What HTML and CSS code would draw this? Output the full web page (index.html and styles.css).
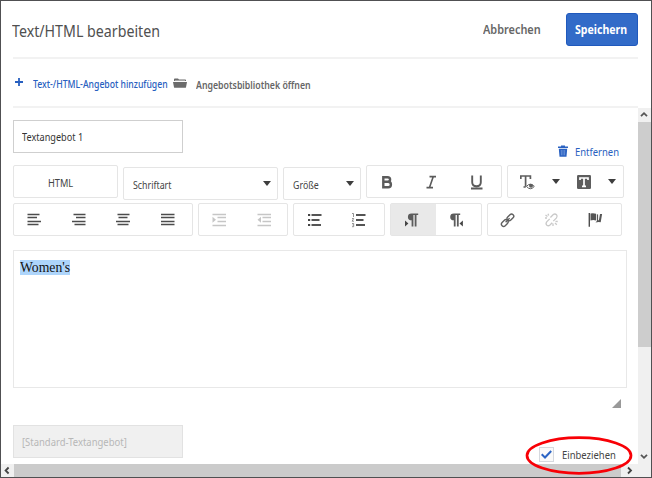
FILE: index.html
```html
<!DOCTYPE html>
<html lang="de">
<head>
<meta charset="utf-8">
<title>Text/HTML bearbeiten</title>
<link rel="stylesheet" href="styles.css">
</head>
<body>
<div class="dialog">
  <header class="header">
    <h1 class="title">Text/HTML bearbeiten</h1>
    <button class="cancel"><span class="t-cancel">Abbrechen</span></button>
    <button class="save"><span class="t-save">Speichern</span></button>
  </header>
  <nav class="actions">
    <svg class="plus" width="8" height="8" viewBox="0 0 8 8"><path d="M4 0v8M0 4h8" stroke="#2860c0" stroke-width="1.8"/></svg>
    <a class="add">Text-/HTML-Angebot hinzufügen</a>
    <svg class="folder" width="14" height="10" viewBox="0 0 14 10"><path d="M1 3V1.2Q1 .4 1.8.4H5l1 1.1h6.3q.7 0 .7.8V3z" fill="#6b6b6b"/><path d="M0 4h14l-1 5.2q-.1.6-.8.6H1.8q-.7 0-.8-.6z" fill="#6b6b6b"/><path d="M2 2.6h10" stroke="#ccc" stroke-width=".7"/></svg>
    <a class="library">Angebotsbibliothek öffnen</a>
  </nav>
  <div class="workspace">
    <main class="content">
      <div class="offer-row">
        <div class="field"><span class="t-name">Textangebot 1</span></div>
        <a class="remove"><svg width="10" height="12" viewBox="0 0 10 12"><path d="M0 1.5h3V.4h4v1.1h3V3H0z" fill="#2a62c2"/><path d="M.8 3.7h8.4l-.7 8H1.5z" fill="#2a62c2"/><path d="M3.3 5l.2 5.3M5 5v5.3M6.7 5l-.2 5.3" stroke="#b8cdf0" stroke-width=".4"/></svg><span class="t-remove">Entfernen</span></a>
      </div>
      <div class="toolbar first">
        <div class="group html"><span class="t-html">HTML</span></div>
        <div class="group select font"><span class="t-font">Schriftart</span><i class="caret"></i></div>
        <div class="group select size"><span class="t-size">Größe</span><i class="caret"></i></div>
        <div class="group style">
          <svg width="45" height="32" viewBox="0 0 45 32"><path d="M16.300 11.200h4.200q2.600 0 2.600 2.300t-2.600 2.300H16.300zm0 4.600h4.800q2.800 0 2.800 2.700t-2.800 2.700H16.300z" fill="none" stroke="#5b5b5b" stroke-width="2.400"/></svg>
          <svg width="45" height="32" viewBox="0 0 45 32"><path d="M17.500 10.600h6.500M14.500 21.600H21M21.300 10.600l-3.800 11" fill="none" stroke="#5b5b5b" stroke-width="1.600"/></svg>
          <svg width="45" height="32" viewBox="0 0 45 32"><path d="M15.200 9.500v6.700q0 4 4.300 4t4.300-4V9.500M14 22.500h11.500" fill="none" stroke="#5b5b5b" stroke-width="1.900"/></svg>
        </div>
        <div class="group color">
          <svg class="textcolor" width="15" height="15" viewBox="0 0 15 15"><path d="M.8 4V1h9.600v3M5.600 1v10.500M3.500 12h2.200" fill="none" stroke="#5d5d5d" stroke-width="1.700"/><path d="M6.500 11.400q3.600-4.400 7.800 0-4 4.700-7.800 0z" fill="#fff" stroke="#5d5d5d" stroke-width="1"/><circle cx="11" cy="10.800" r="2" fill="#5d5d5d"/></svg>
          <i class="caret"></i>
          <svg class="backcolor" width="14" height="14" viewBox="0 0 14 14"><rect width="14" height="14" rx="1.200" fill="#5d5d5d"/><path d="M3 5V3h8v2M7 3v8.200M5 11.300h4" fill="none" stroke="#fff" stroke-width="1.700"/></svg>
          <i class="caret"></i>
        </div>
      </div>
      <div class="toolbar second">
        <div class="group align">
          <svg viewBox="0 0 45 31"><path d="M13.500 10.500h12M13.500 13.500h9.500M13.500 17.500h13.500M13.500 20.500h11" stroke="#4c4c4c" stroke-width="1.300"/></svg>
          <svg viewBox="0 0 45 31"><path d="M14.500 10.500h12M17 13.500h9.500M13 17.500h13.500M15.500 20.500h11" stroke="#4c4c4c" stroke-width="1.300"/></svg>
          <svg viewBox="0 0 45 31"><path d="M14.500 10.500h12M15.500 13.500h9M13 17.500h14M14.500 20.500h11" stroke="#4c4c4c" stroke-width="1.300"/></svg>
          <svg viewBox="0 0 45 31"><path d="M13 10.500h13.500M13 13.500h13.500M13 17.500h13.500M13 20.500h13.500" stroke="#4c4c4c" stroke-width="1.300"/></svg>
        </div>
        <div class="group indent">
          <svg viewBox="0 0 45 31"><path d="M13.500 10.500H27M18.500 13.500H27M18.500 17.500H27M13.500 21.500H27" stroke="#c6c6c6" stroke-width="1.300"/><path d="M13.500 12.700l3.500 3-3.500 3z" fill="#c6c6c6"/></svg>
          <svg viewBox="0 0 45 31"><path d="M13.500 10.500H27M18.500 13.500H27M18.500 17.500H27M13.500 21.500H27" stroke="#c6c6c6" stroke-width="1.300"/><path d="M17 12.700l-3.500 3 3.500 3z" fill="#c6c6c6"/></svg>
        </div>
        <div class="group lists">
          <svg viewBox="0 0 45 31"><path d="M17.500 11H27.500M17.500 16H25.500M17.500 21H27" stroke="#555" stroke-width="2.100"/><path d="M14 11h2.200M14 16h2.200M14 21h2.200" stroke="#444" stroke-width="2.100"/></svg>
          <svg viewBox="0 0 45 31"><path d="M17 11H26.500M17 16H24.500M17 21H26" stroke="#555" stroke-width="2.100"/><path d="M13 9.500h1.500V13M13 14.500h1.700l-1.600 2.700H15M13 19.500h1.700v3.200H13M13.500 21h1" fill="none" stroke="#777" stroke-width=".8"/></svg>
        </div>
        <div class="group direction">
          <svg class="active" viewBox="0 0 45 31"><path d="M27.200 9.500H20.500q-3.600 0-3.600 3.400t3.700 3.400v6.200h1.800V11h1.300v11.500H25.500V11h1.700z" fill="#5c5c5c"/><path d="M14 16.500l3.400 3-3.400 3z" fill="#444"/></svg>
          <svg viewBox="0 0 45 31"><path d="M24.200 9.500h-6.400q-3.600 0-3.600 3.400t3.600 3.400v6.200h1.800V11h1.300v11.500h1.800V11h1.500z" fill="#5c5c5c"/><path d="M26.900 16.500l-3.400 3 3.400 3z" fill="#444"/></svg>
        </div>
        <div class="group links">
          <svg viewBox="0 0 45 31"><g fill="none" stroke="#606060" stroke-width="1.400"><rect x="-3.800" y="-2.200" width="7.600" height="4.400" rx="2.200" transform="translate(16.800 19) rotate(-45)"/><rect x="-3.800" y="-2.200" width="7.600" height="4.400" rx="2.200" transform="translate(22.400 13.400) rotate(-45)"/><path d="M17.600 18.200l4-4"/></g></svg>
          <svg viewBox="0 0 45 31"><g fill="none" stroke="#c9c9c9" stroke-width="1.300"><path d="M16.700 14.900l-3 3q-1.400 1.900.2 3.300 1.500 1.200 3.100-.2l2.200-2.200M17.400 13.500l2.900-2.900q1.700-1.300 3.200.1 1.300 1.600 0 3.200l-3.200 3.200M12.500 11l2 1.500M15 9.800l.7 1.700M12 14h2M20 19.500V22M22 19l1.800 1.800M22.500 17.300l2.200.2"/></g></svg>
          <svg viewBox="0 0 45 31"><path d="M12.300 9v13.800" stroke="#4e4e4e" stroke-width="1.400"/><path d="M13.500 9.500q3-.6 5.600.3v6.600q-2.800-.8-5.600 0z" fill="#555"/><path d="M19.900 10.300l1.200.1v5.900h.8l1.100-6.200 2.100-.2-1.400 8.300q-2.600-.4-5.200.2l1.400-1.300z" fill="#555"/></svg>
        </div>
      </div>
      <section class="editor"><span class="selection">Women's</span></section>
      <div class="grip-row"><i class="grip"></i></div>
      <div class="default-row">
        <div class="field disabled"><span class="t-default">[Standard-Textangebot]</span></div>
        <label class="include"><span class="box"><svg width="11" height="9" viewBox="0 0 11 9"><path d="M.7 4.300L4 7.500 10.200 1" fill="none" stroke="#2b64c4" stroke-width="2"/></svg></span><span class="t-include">Einbeziehen</span></label>
      </div>
    </main>
    <aside class="vbar">
      <svg width="12" height="14" viewBox="0 0 12 14"><path d="M3 8.200l3-3 3 3" fill="none" stroke="#555" stroke-width="1.800"/></svg>
      <i class="vthumb"></i>
      <svg class="down" width="12" height="14" viewBox="0 0 12 14"><path d="M3 4.800l3 3 3-3" fill="none" stroke="#555" stroke-width="1.800"/></svg>
    </aside>
  </div>
  <footer class="hbar">
    <svg width="13" height="13" viewBox="0 0 13 13"><path d="M7.600 3.500l-3 3 3 3" fill="none" stroke="#444" stroke-width="1.800"/></svg>
    <i class="hthumb"></i>
    <svg width="17" height="13" viewBox="0 0 17 13"><path d="M7 3.500l3 3-3 3" fill="none" stroke="#444" stroke-width="1.800"/></svg>
  </footer>
  <svg class="highlight" width="108" height="40" viewBox="0 0 108 40"><ellipse cx="54" cy="19.500" rx="52" ry="17.800" fill="none" stroke="#f80006" stroke-width="2.700"/></svg>
</div>
</body>
</html>
```
FILE: styles.css
```css
* { box-sizing: border-box; }
body { margin: 0; font-family: "Noto Sans", "Open Sans", sans-serif; color: #444; overflow: hidden; }
svg { display: block; flex: none; }
span, a, h1 { white-space: nowrap; }
.title, .add, .library, [class^="t-"] { display: block; flex: none; transform-origin: 0 50%; }
.dialog { position: relative; width: 652px; height: 478px; border: 1px solid #505052; background: #fff; display: flex; flex-direction: column; }
.header { height: 58px; flex: none; margin: 0 13px 0 12px; border-bottom: 2px solid #f2f2f2; display: flex; align-items: center; padding-top: 1px; }
.title { margin: 0 auto 0 -1px; font-size: 17px; font-weight: 400; color: #505050; transform: scaleX(.836); padding-top: 2px; }
button { font-family: inherit; border: 0; background: none; padding: 0; }
.cancel { width: 59px; margin-right: 24px; font-size: 12px; font-weight: 600; color: #666; }
.t-cancel { width: 58px; text-align: left; transform: scaleX(.91); }
.save { width: 72px; height: 33px; background: #326bc8; border: 1px solid #2059bd; border-radius: 3px; color: #fff; font-size: 12px; font-weight: 700; padding-left: 8px; }
.t-save { width: 54px; text-align: left; transform: scaleX(.88); }
.actions { height: 49px; flex: none; margin: 0 0 0 12px; border-bottom: 2px solid #f2f2f2; display: flex; align-items: center; width: 625px; padding-top: 3px; }
.plus { margin: 0 10px 4px 2px; }
.add { width: 139.5px; font-size: 10.5px; font-weight: 500; color: #2860c0; transform: scaleX(.825); }
.folder { margin-right: 9px; margin-bottom: 2px; }
.library { font-size: 10.5px; font-weight: 600; color: #666; padding-top: 1px; transform: scaleX(.835); }
.workspace { height: 356px; flex: none; display: flex; }
.content { width: 637px; padding: 12px 0 0 12px; }
.offer-row { display: flex; height: 45px; justify-content: space-between; width: 606px; }
.field { width: 170px; height: 33px; border: 1px solid #cfcfcf; display: flex; align-items: center; padding-left: 8px; font-size: 10.5px; color: #333; }
.t-name { transform: scaleX(.87); }
.remove { display: flex; height: 14px; margin-top: 24px; gap: 7px; align-items: center; color: #2860c0; font-size: 10.5px; }
.t-remove { width: 44px; padding-top: 2px; transform: scaleX(.9); }
.toolbar { display: flex; gap: 5px; }
.first { height: 38px; }
.group { border: 1px solid #e5e5e5; border-radius: 2px; height: 33px; display: flex; align-items: center; flex: none; }
.html { width: 105px; padding-left: 34px; font-size: 10.5px; padding-top: 2px; }
.t-html { transform: scaleX(.88); }
.select { height: 33px; margin-top: 2px; font-size: 10.5px; justify-content: space-between; padding: 0 6px 0 9px; }
.select span { padding-top: 3px; transform: scaleX(.84); }
.font { width: 155px; }
.size { width: 78px; }
.caret { flex: none; border: 4.5px solid transparent; border-top: 5px solid #3e3e3e; border-bottom: 0; }
.style { width: 136px; }
.color { width: 117px; padding-left: 12px; }
.textcolor { margin: 2px 17px 0 0; }
.backcolor { margin: 1px 17px 0 17px; }
.second { height: 47px; }
.second .group svg { width: 45px; height: 31px; }
.second .group svg + svg { margin-left: -.3px; }
.align { width: 180px; }
.indent { width: 90px; }
.lists { width: 92px; }
.direction { width: 92px; }
.links { width: 135px; }
.active { background: #e9e9e9; }
.editor { width: 614px; height: 138px; border: 1px solid #e8e8e8; padding: 8px 0 0 6px; font-family: "Liberation Serif", serif; font-size: 13.7px; line-height: 17px; color: #111; }
.selection { background: #aed5fb; display: inline-block; height: 15px; line-height: 15px; }
.grip-row { height: 37px; padding: 11px 0 0 599px; }
.grip { display: block; width: 9px; height: 9px; background: #999; clip-path: polygon(100% 0, 100% 100%, 0 100%); }
.default-row { display: flex; justify-content: space-between; width: 603px; }
.disabled { background: #f0f0f0; border-color: #e2e2e2; color: #b7b7b7; font-size: 11px; }
.t-default { transform: scaleX(.86); }
.include { display: flex; gap: 8px; align-items: center; height: 16px; margin-top: 21px; font-size: 10.5px; }
.t-include { width: 54px; padding-top: 1px; transform: scaleX(.9); }
.box { width: 15px; height: 15px; border: 1px solid #d6d9df; background: #fafafa; display: grid; place-items: center; }
.vbar { width: 13px; background: #f0f0f0; display: flex; flex-direction: column; }
.vthumb { height: 225px; background: #cdcdcd; }
.down { margin-top: auto; }
.hbar { height: 13px; display: flex; background: #f0f0f0; }
.hthumb { width: 607px; background: #cbcbcb; }
.highlight { position: absolute; left: 524px; top: 435px; }
```
